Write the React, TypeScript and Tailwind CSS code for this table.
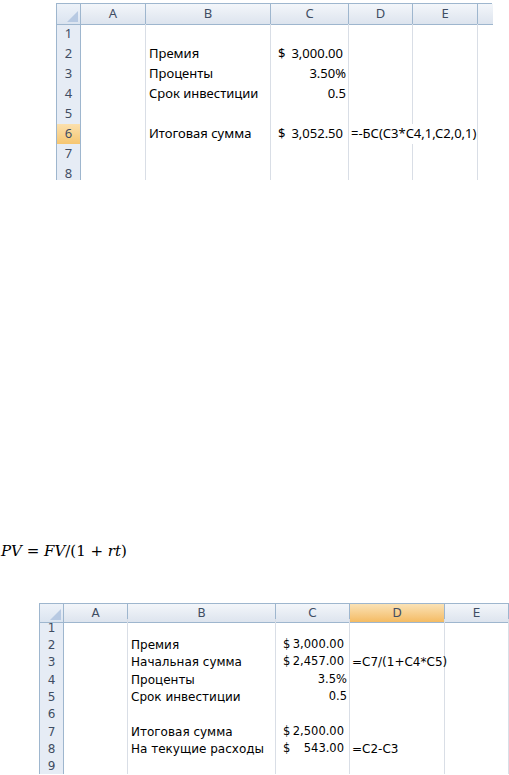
import React from "react";

type Val = { t: "text"; v: string } | { t: "acc"; v: string } | { t: "num"; v: string };

interface Row {
  n: string;
  b?: string;
  c?: Val;
  d?: string;
  span?: boolean;
  hi?: boolean;
  h: string;
}

interface SheetProps {
  cols: string;
  font: string;
  numFont: string;
  headerH: string;
  hiCol?: string;
  rows: Row[];
  tail?: boolean;
}

const letters = ["A", "B", "C", "D", "E"];

function Corner() {
  return (
    <div className="relative border-r border-b border-[#9eb6ce] bg-gradient-to-b from-[#edf2f9] to-[#dbe4f0]">
      <svg className="absolute right-[2px] bottom-[2px]" width="11" height="11" viewBox="0 0 11 11">
        <polygon points="11,0 11,11 0,11" fill="#b7c9e2" />
      </svg>
    </div>
  );
}

function Sheet({ cols, font, numFont, headerH, hiCol, rows, tail }: SheetProps) {
  return (
    <div className={`${font} text-black`}>
      <div className={`grid ${cols} ${headerH} border-t border-l border-[#9eb6ce]`}>
        <Corner />
        {letters.map((l) => (
          <div
            key={l}
            className={`flex items-center justify-center border-r border-b border-[#9eb6ce] text-[#3f4d63] ${
              l === hiCol
                ? "bg-gradient-to-b from-[#fae2b5] to-[#f4bb62]"
                : "bg-gradient-to-b from-[#f3f6fa] to-[#dde4ee]"
            }`}
          >
            {l}
          </div>
        ))}
        {tail && <div className="border-b border-[#9eb6ce] bg-gradient-to-b from-[#f3f6fa] to-[#dde4ee]" />}
      </div>
      {rows.map((r) => (
        <div key={r.n} className={`grid ${cols} ${r.h} overflow-hidden border-l border-[#9eb6ce]`}>
          <div
            className={`flex items-center justify-center border-r border-b border-r-[#9eb6ce] border-b-[#c7d3e2] text-[#3f4d63] ${
              r.hi ? "bg-gradient-to-b from-[#fbe0ad] to-[#f6c670]" : "bg-[#e6ecf5]"
            }`}
          >
            {r.n}
          </div>
          <div className="border-r border-b border-[#d9dee6]" />
          <div className="flex items-center whitespace-nowrap border-r border-b border-[#d9dee6] pl-[3px]">{r.b}</div>
          <div className={`flex items-center whitespace-nowrap border-r border-b border-[#d9dee6] ${numFont}`}>
            {r.c?.t === "acc" && (
              <div className="flex w-full justify-between pl-[7px] pr-[5px]">
                <span>$</span>
                <span>{r.c.v}</span>
              </div>
            )}
            {r.c?.t === "num" && <div className="w-full pr-[2px] text-right">{r.c.v}</div>}
          </div>
          <div
            className={`flex items-center whitespace-nowrap border-r border-b border-[#d9dee6] pl-[2px] ${
              r.span ? "col-span-2" : ""
            }`}
          >
            {r.d}
          </div>
          {!r.span && <div className="border-r border-b border-[#d9dee6]" />}
          {tail && <div className="border-b border-[#d9dee6]" />}
        </div>
      ))}
    </div>
  );
}

const topRows: Row[] = [
  { n: "1", h: "h-[20px]" },
  { n: "2", b: "Премия", c: { t: "acc", v: "3,000.00" }, h: "h-[20px]" },
  { n: "3", b: "Проценты", c: { t: "num", v: "3.50%" }, h: "h-[20px]" },
  { n: "4", b: "Срок инвестиции", c: { t: "num", v: "0.5" }, h: "h-[20px]" },
  { n: "5", h: "h-[20px]" },
  {
    n: "6",
    b: "Итоговая сумма",
    c: { t: "acc", v: "3,052.50" },
    d: "=-БС(C3*C4,1,C2,0,1)",
    span: true,
    hi: true,
    h: "h-[20px]",
  },
  { n: "7", h: "h-[20px]" },
  { n: "8", h: "h-[16px]" },
];

const bottomRows: Row[] = [
  { n: "1", h: "h-[17px]" },
  { n: "2", b: "Премия", c: { t: "acc", v: "3,000.00" }, h: "h-[17px]" },
  { n: "3", b: "Начальная сумма", c: { t: "acc", v: "2,457.00" }, d: "=C7/(1+C4*C5)", h: "h-[18px]" },
  { n: "4", b: "Проценты", c: { t: "num", v: "3.5%" }, h: "h-[17px]" },
  { n: "5", b: "Срок инвестиции", c: { t: "num", v: "0.5" }, h: "h-[17px]" },
  { n: "6", h: "h-[18px]" },
  { n: "7", b: "Итоговая сумма", c: { t: "acc", v: "2,500.00" }, h: "h-[17px]" },
  { n: "8", b: "На текущие расходы", c: { t: "acc", v: "543.00" }, d: "=C2-C3", h: "h-[17px]" },
  { n: "9", h: "h-[17px]" },
];

export default function App() {
  return (
    <div className="h-[775px] w-[509px] overflow-hidden bg-white">
      <div className="ml-[56px] w-[436px] pt-[3px]">
        <Sheet
          cols="grid-cols-[24px_65px_125px_78px_64px_65px_15px]"
          font="font-['Noto_Sans',sans-serif] text-[13px]"
          numFont=""
          headerH="h-[21px]"
          rows={topRows}
          tail
        />
      </div>

      <p className="mt-[361px] h-[20px] pl-[1px] font-['DejaVu_Serif',serif] text-[15px] leading-[20px] text-black">
        <i>PV</i> = <i>FV</i>/(1 + <i>rt</i>)
      </p>

      <div className="ml-[39px] mt-[42px] w-[470px]">
        <Sheet
          cols="grid-cols-[24px_64px_148px_74px_95px_64px_1px]"
          font="font-['DejaVu_Sans',sans-serif] text-[12px]"
          numFont="text-[11.5px]"
          headerH="h-[16px]"
          hiCol="D"
          rows={bottomRows}
          tail
        />
      </div>
    </div>
  );
}
